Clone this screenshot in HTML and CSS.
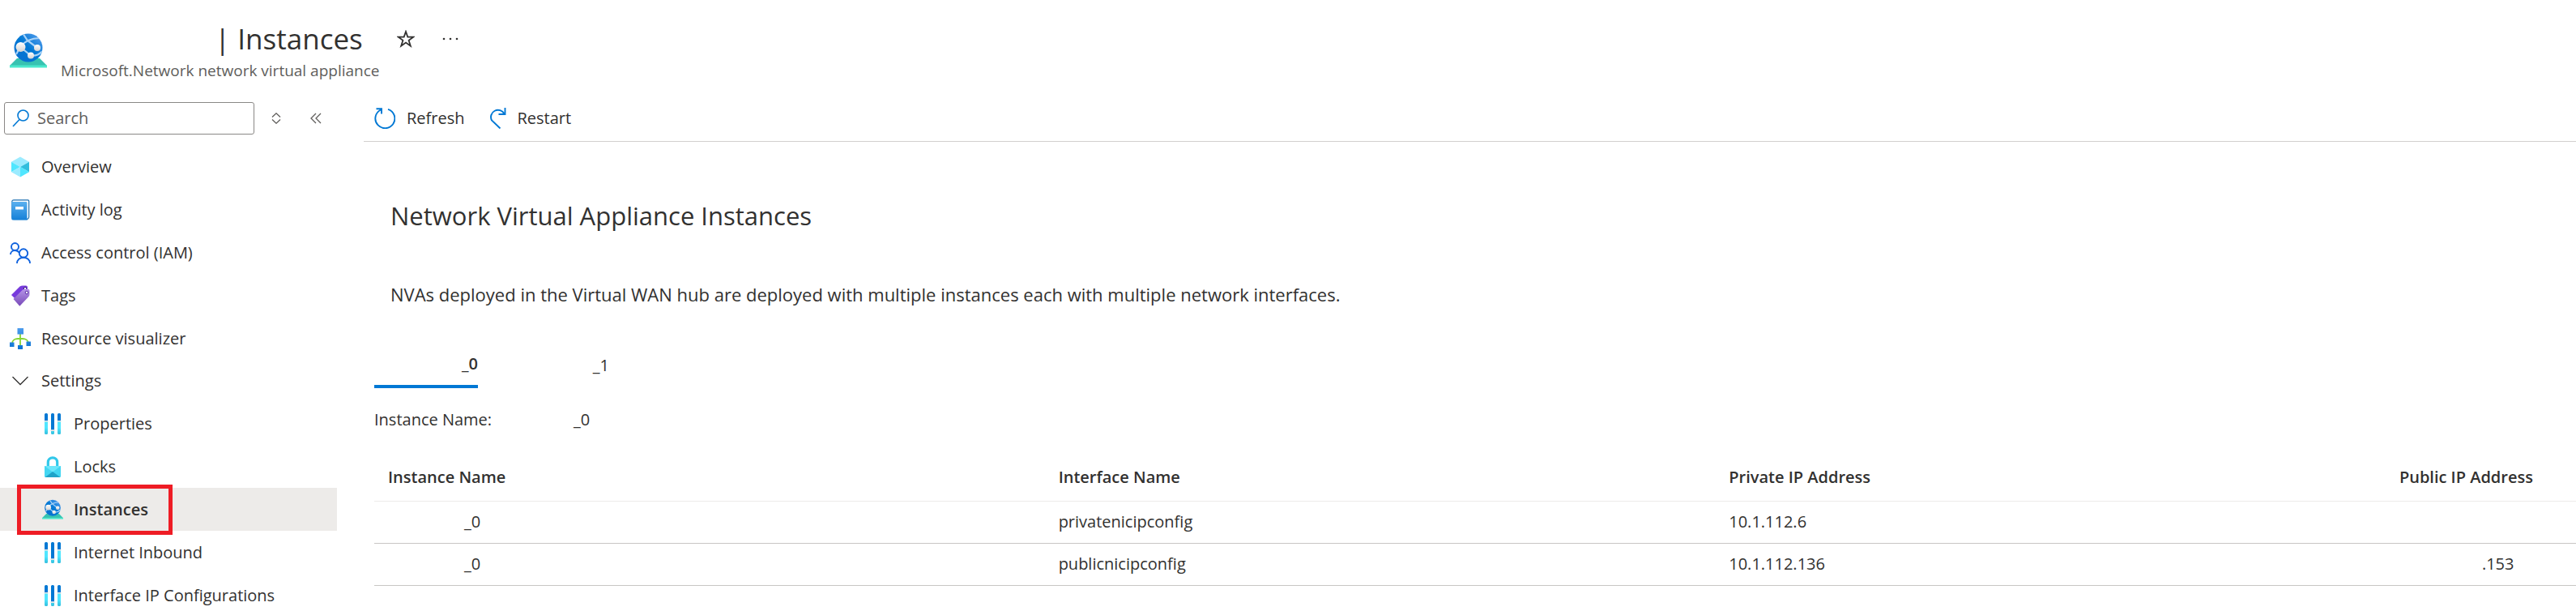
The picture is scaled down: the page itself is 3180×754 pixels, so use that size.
FILE: index.html
```
<!DOCTYPE html>
<html lang="en">
<head>
<meta charset="utf-8">
<title>Instances</title>
<link rel="stylesheet" href="styles.css">
</head>
<body>
<svg class="defs" aria-hidden="true">
  <defs>
    <linearGradient id="globe" x1="0" y1="1" x2="1" y2="0"><stop offset="0" stop-color="#0f6fd0"/><stop offset=".5" stop-color="#0078d4"/><stop offset="1" stop-color="#5ea0ef"/></linearGradient>
    <linearGradient id="node" x1="0" y1="0" x2="0" y2="1"><stop offset="0" stop-color="#fff"/><stop offset="1" stop-color="#d2d2d2"/></linearGradient>
    <linearGradient id="book" x1="0" y1="0" x2="0" y2="1"><stop offset="0" stop-color="#5ab0ef"/><stop offset="1" stop-color="#1580d8"/></linearGradient>
    <linearGradient id="tag" x1="0" y1="0" x2="0" y2="1"><stop offset="0" stop-color="#b796e8"/><stop offset="1" stop-color="#7748b8"/></linearGradient>
    <linearGradient id="box" x1="0" y1="0" x2="0" y2="1"><stop offset="0" stop-color="#4c9ced"/><stop offset="1" stop-color="#0a73d2"/></linearGradient>
    <linearGradient id="cyan" x1="0" y1="1" x2="0" y2="0"><stop offset="0" stop-color="#32bedd"/><stop offset=".5" stop-color="#50e6ff"/></linearGradient>
    <clipPath id="globe-clip"><circle cx="23" cy="18" r="17.5"/></clipPath>
    <symbol id="i-nva" viewBox="0 0 46 44">
      <path d="M9 31h28l9 9H0z" fill="#37c2b1"/><path d="M0 39.500h46V42.500H0z" fill="#4be8cb"/>
      <circle cx="23" cy="18" r="17.500" fill="url(#globe)"/>
      <g clip-path="url(#globe-clip)" fill="none" stroke="#a9d3f8" stroke-width="2.200">
        <path d="M13 17C19 9 26 6 37 6M16 0l6 9 12 9M13 17l13 10.500M26 27.500c6 1 10-1 14-5M13 17l-5 9"/>
      </g>
      <circle cx="13.500" cy="17" r="6" fill="url(#node)"/><circle cx="34" cy="18" r="4" fill="url(#node)"/><circle cx="26" cy="27.500" r="4" fill="url(#node)"/>
    </symbol>
    <symbol id="i-props" viewBox="0 0 26 26">
      <path d="M3 10h4v14.500q0 1.500-1.500 1.500h-1Q3 26 3 24.500zM19 10h4v14.500q0 1.500-1.500 1.500h-1Q19 26 19 24.500zM11 22h4v2.500q0 1.500-1.500 1.500h-1Q11 26 11 24.500z" fill="url(#cyan)"/>
      <path d="M3 9V1.500Q3 0 4.500 0h1Q7 0 7 1.500V9zM19 9V1.500Q19 0 20.500 0h1Q23 0 23 1.500V9zM11 20.500v-19Q11 0 12.500 0h1Q15 0 15 1.500v19z" fill="#0078d4"/>
      <path d="M2.500 9h5v1.500h-5zM18.500 9h5v1.500h-5zM10.500 20.500h5V22h-5z" fill="#e6e6e6"/>
    </symbol>
  </defs>
</svg>

<header class="page-header">
  <svg class="page-icon"><use href="#i-nva"/></svg>
  <div class="page-heading">
    <div class="title-row">
      <h1 class="page-title">| Instances</h1>
      <button class="icon-button" aria-label="Favorite"><svg width="22" height="22" viewBox="0 0 22 22"><path d="M11 2l2.300 6.600h7l-5.700 4.200 2.200 6.900L11 15.600l-5.800 4.100 2.200-6.900-5.700-4.200h7z" fill="none" stroke="#323130" stroke-width="1.800"/></svg></button>
      <button class="icon-button" aria-label="More"><svg width="20" height="22" viewBox="0 0 20 22" fill="#323130"><circle cx="2" cy="11" r="1.300"/><circle cx="10" cy="11" r="1.300"/><circle cx="18" cy="11" r="1.300"/></svg></button>
    </div>
    <p class="page-subtitle">Microsoft.Network network virtual appliance</p>
  </div>
</header>

<div class="layout">
  <aside class="sidebar">
    <div class="search-row">
      <label class="search">
        <svg width="22" height="22" viewBox="0 0 22 22" fill="none" stroke="#0078d4" stroke-width="1.600"><circle cx="13.500" cy="7.500" r="6.500"/><path d="M9 12.500L1 21"/></svg>
        <input type="text" placeholder="Search" aria-label="Search">
      </label>
      <button class="icon-button" aria-label="Expand or collapse all"><svg width="12" height="14" viewBox="0 0 12 14" fill="none" stroke="#605e5c" stroke-width="1.300"><path d="M1 5.500L6 .8l5 4.700M1 8.500l5 4.700 5-4.700"/></svg></button>
      <button class="icon-button collapse" aria-label="Collapse menu"><svg width="14" height="14" viewBox="0 0 14 14" fill="none" stroke="#605e5c" stroke-width="1.300"><path d="M7 1L1 7l6 6M13 1L7 7l6 6"/></svg></button>
    </div>
    <nav class="menu">
      <a class="menu-item" href="#"><svg class="menu-icon" viewBox="0 0 26 26"><path d="M13 .5l11 6.200L13 13 2 6.700z" fill="#9cebff"/><path d="M2 6.700L13 13 2 19.200z" fill="#50e6ff"/><path d="M24 6.700L13 13l11 6.200z" fill="#32bedd"/><path d="M13 13L2 19.200l11 6.300z" fill="#9cebff"/><path d="M13 13l11 6.200-11 6.300z" fill="#50e6ff"/></svg>Overview</a>
      <a class="menu-item" href="#"><svg class="menu-icon" viewBox="0 0 26 26"><path d="M5 .8h17.500q1.200 0 1.200 1.200v20q0 1-2.200 2.700H5Q2.800 24 2.800 22V3Q2.800.8 5 .8z" fill="#fff" stroke="#1c6fb0" stroke-width="1.200"/><path d="M2.300 3h18.200q1 0 1 1.500v21H4q-1.700 0-1.700-1.500z" fill="url(#book)"/><path d="M7 9h10v3.500H7z" fill="#fff"/></svg>Activity log</a>
      <a class="menu-item" href="#"><svg class="menu-icon" viewBox="0 0 26 26" fill="none" stroke="#0f62de" stroke-width="1.900"><circle cx="6.500" cy="5.500" r="4.500"/><circle cx="17" cy="13.500" r="5.200"/><path d="M1 15c0-3 2.500-5 5.500-5 2.300 0 4.200 1.200 5.500 3M9 26c0-4.500 3.500-7.300 8-7.300s8 2.800 8 7.300"/></svg>Access control (IAM)</a>
      <a class="menu-item" href="#"><svg class="menu-icon" viewBox="0 0 26 26"><path d="M2 12L12.500 1.500Q14 .5 16 .5h4q2 0 2 2V7L8 18z" fill="#773adc"/><circle cx="19" cy="4" r="1.700" fill="#fff" stroke="#3b1a80"/><path d="M4.500 17L15.500 6q1.500-1.500 3.500-1.500h3q2.500 0 2.500 2.500v4q0 2-1.500 3.500L12.300 25.800z" fill="url(#tag)"/><circle cx="21" cy="9" r="1.800" fill="#fff" stroke="#5b2ea8"/></svg>Tags</a>
      <a class="menu-item" href="#"><svg class="menu-icon" viewBox="0 0 26 26"><path d="M13 6v16M3 19c0-4 3.500-6 7-6h6c3.500 0 7 2 7 6" fill="none" stroke="#86d633" stroke-width="1.800"/><path d="M9.500 0h7.500v7.500H9.500zM0 17.500h5.500V23H0zM20.500 16.500H26V22h-5.500zM10 21h6v5h-6z" fill="url(#box)"/></svg>Resource visualizer</a>
      <a class="menu-item menu-group" href="#"><svg class="menu-icon" viewBox="0 0 26 26" fill="none" stroke="#323130" stroke-width="1.300"><path d="M3.500 8l9.500 9.500L22.500 8"/></svg>Settings</a>
      <a class="menu-item child" href="#"><svg class="menu-icon"><use href="#i-props"/></svg>Properties</a>
      <a class="menu-item child" href="#"><svg class="menu-icon" viewBox="0 0 26 26"><path d="M7.300 13V7.500a5.700 5.700 0 0 1 11.400 0V13" fill="none" stroke="#32c8ea" stroke-width="3.200"/><path d="M3 12h20v12.500q0 1.500-1.500 1.500h-17Q3 26 3 24.500z" fill="#43d6f2"/><path d="M3 12h20L13 19.500z" fill="#6be6fb"/><path d="M3.500 26L13 19l9.500 7z" fill="#1fa3c8"/></svg>Locks</a>
      <a class="menu-item child selected" href="#" aria-current="page"><svg class="menu-icon"><use href="#i-nva"/></svg>Instances</a>
      <a class="menu-item child" href="#"><svg class="menu-icon"><use href="#i-props"/></svg>Internet Inbound</a>
      <a class="menu-item child" href="#"><svg class="menu-icon"><use href="#i-props"/></svg>Interface IP Configurations</a>
    </nav>
  </aside>

  <main class="content">
    <div class="toolbar">
      <button class="command"><svg width="26" height="26" viewBox="0 0 26 26" fill="none" stroke="#0078d4" stroke-width="1.900"><path d="M17 1.800A12 12 0 1 1 8 2.500M2.500 1.200H9v6.300"/></svg>Refresh</button>
      <button class="command"><svg width="22" height="26" viewBox="0 0 22 26" fill="none" stroke="#0078d4" stroke-width="1.900"><path d="M14.500 25.500L4 15.500A8.700 8.700 0 1 1 19.500 7.500M20.500 0v8h-8"/></svg>Restart</button>
    </div>
    <section class="intro">
      <h2 class="section-title">Network Virtual Appliance Instances</h2>
      <p class="section-text">NVAs deployed in the Virtual WAN hub are deployed with multiple instances each with multiple network interfaces.</p>
    </section>
    <section class="details">
      <div class="tabs" role="tablist">
        <button class="tab active" role="tab" aria-selected="true">_0</button>
        <button class="tab" role="tab" aria-selected="false">_1</button>
      </div>
      <p class="instance"><span>Instance Name:</span><span class="instance-value">_0</span></p>
      <table class="grid">
        <thead><tr><th>Instance Name</th><th>Interface Name</th><th>Private IP Address</th><th>Public IP Address</th></tr></thead>
        <tbody>
          <tr><td class="name">_0</td><td>privatenicipconfig</td><td>10.1.112.6</td><td></td></tr>
          <tr><td class="name">_0</td><td>publicnicipconfig</td><td>10.1.112.136</td><td class="public">.153</td></tr>
        </tbody>
      </table>
    </section>
  </main>
</div>
</body>
</html>
```
FILE: styles.css
```
*, *::after { box-sizing: border-box; }
body {
  margin: 0;
  background: #fff;
  color: #323130;
  font: 20px/28px "Open Sans", "Noto Sans", sans-serif;
}
h1, h2, p { margin: 0; font-weight: 400; }
button { border: 0; padding: 0; background: none; color: inherit; font: inherit; }
svg { display: block; flex: none; }
.defs { position: absolute; width: 0; height: 0; }

.page-header { display: flex; gap: 17px; padding: 24px 12px 0; height: 126px; }
.page-icon { width: 46px; height: 44px; margin-top: 17px; }
.title-row { display: flex; align-items: center; gap: 34px; height: 48px; padding-left: 190px; }
.page-title { font-size: 35px; line-height: 48px; margin-right: 8px; }
.page-subtitle { color: #605e5c; font-size: 19px; line-height: 30px; }
.icon-button { display: flex; }

.layout { display: flex; }
.sidebar { width: 416px; flex: none; }
.search-row { display: flex; align-items: center; gap: 21px; padding-left: 5px; height: 40px; }
.search {
  display: flex; align-items: center; gap: 9px;
  width: 309px; height: 40px; padding: 0 9px;
  border: 1px solid #8a8886; border-radius: 3px;
}
.search input { flex: 1; min-width: 0; border: 0; padding: 0; outline: 0; font: inherit; background: none; }
.search input::placeholder { color: #605e5c; opacity: 1; }
.collapse { margin-left: 15px; }

.menu { display: flex; flex-direction: column; margin-top: 13px; }
.menu-item {
  display: flex; align-items: center; gap: 13px;
  height: 53px; padding-left: 12px;
  color: inherit; text-decoration: none;
}
.menu-group { height: 52px; }
.child { padding-left: 52px; }
.menu-icon { width: 26px; height: 26px; }
.selected { position: relative; background: #edebe9; font-weight: 600; }
.selected::after {
  content: ""; position: absolute; left: 21px; top: -4px;
  width: 192px; height: 62px; border: 5px solid #ee1c25;
}

.content { flex: 1; min-width: 0; margin-left: 33px; }
.toolbar { display: flex; gap: 29px; height: 49px; padding: 0 0 9px 13px; border-bottom: 1px solid #d2d0ce; }
.command { display: flex; align-items: center; gap: 14px; }
.intro { padding: 69px 0 0 33px; }
.section-title { font-size: 31px; line-height: 44px; }
.section-text { margin-top: 61px; font-size: 22px; }
.details { padding: 58px 0 0 13px; }
.tabs { display: flex; gap: 34px; }
.tab { width: 128px; height: 44px; padding-bottom: 13px; text-align: right; }
.active { border-bottom: 4px solid #0078d4; font-weight: 600; }
.instance { display: flex; gap: 101px; margin-top: 25px; }
.grid { width: 100%; margin-top: 28px; border-collapse: collapse; table-layout: fixed; }
.grid th, .grid td { height: 52px; padding: 0 0 0 17px; text-align: left; border-bottom: 1px solid #c8c6c4; }
.grid th { width: 30.45%; height: 58px; font-weight: 600; border-color: #edebe9; }
.grid th:last-child { width: auto; }
.grid .name { padding-left: 111px; }
.grid .public { padding-left: 119px; }
```
